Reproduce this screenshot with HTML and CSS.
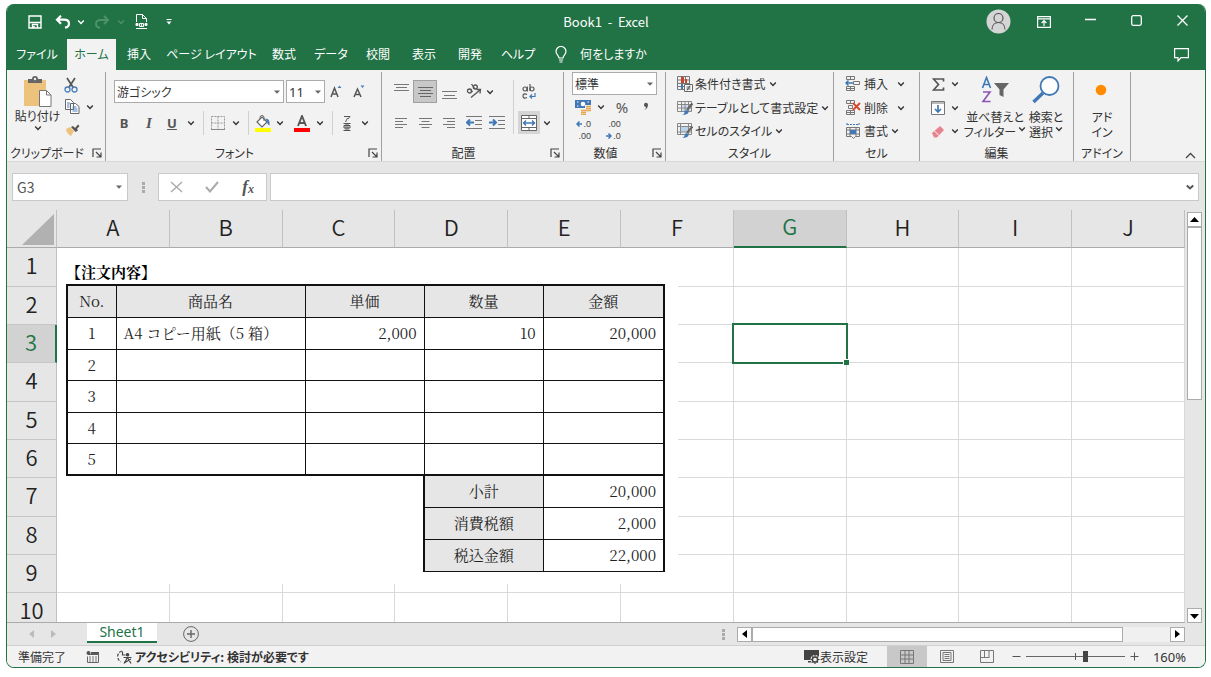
FILE: index.html
```html
<!DOCTYPE html>
<html lang="ja">
<head>
<meta charset="utf-8">
<title>Book1 - Excel</title>
<link rel="stylesheet" href="styles.css">
</head>
<body>
<svg class="sprite" aria-hidden="true">
  <symbol id="chev" viewBox="0 0 8 8"><path d="M1.2 2.6 4 5.4 6.8 2.6" fill="none" stroke="currentColor" stroke-width="1.4"/></symbol>
  <symbol id="tri" viewBox="0 0 8 8"><path d="M1 2.5h6L4 5.700z" fill="#666"/></symbol>
  <symbol id="launch" viewBox="0 0 10 10"><path d="M1 9V1h8M4 4l4.500 4.500M9 4.500V9H4.500" fill="none" stroke="#444" stroke-width="1.200"/></symbol>
</svg>
<div class="window">
  <header class="titlebar">
    <div class="quick">
      <button class="ib" aria-label="保存"><svg width="14" height="14" viewBox="0 0 14 14" fill="none" stroke="#fff" stroke-width="1.400"><path d="M1 1h12v12H1z"/><path d="M1 7.500h12"/><path d="M4.500 13v-3.500h5V13M6 13v-2"/></svg></button>
      <button class="ib" aria-label="元に戻す"><svg width="16" height="14" viewBox="0 0 16 14" fill="none" stroke="#fff" stroke-width="2.200"><path d="M6 .7 2 4.700l4 4M2 4.700h7c3 0 5 1.500 5 4 0 2-1.500 3.500-4 4"/></svg></button>
      <button class="ib" aria-label="元に戻す一覧"><svg class="chev"><use href="#chev"/></svg></button>
      <button class="ib dim" aria-label="やり直し"><svg width="16" height="14" viewBox="0 0 16 14" fill="none" stroke="currentColor" stroke-width="2"><path d="m10 1 4 4-4 4M14 5H7C4 5 2 6.500 2 9c0 2 1.500 3.500 4 4"/></svg></button>
      <button class="ib dim" aria-label="やり直し一覧"><svg class="chev"><use href="#chev"/></svg></button>
      <button class="ib" aria-label="印刷プレビュー"><svg width="13" height="15" viewBox="0 0 13 15" fill="none" stroke="#fff"><path d="M1.500 8V.5h6l4 4V8M7.500.5v4h4"/><path d="M1 9.500h2v2H1zM10 9.500h2v2h-2z" fill="#fff"/><path d="M4.500 9.500h4v3h-4zM1 14.500h11"/><circle cx="6.500" cy="11" r=".5" fill="#fff"/></svg></button>
      <button class="ib" aria-label="クイック アクセスのカスタマイズ"><svg width="8" height="8" viewBox="0 0 8 8"><path d="M1.500 1.500h5" stroke="#fff"/><path d="M1.500 3.500h5L4 6.500z" fill="#fff"/></svg></button>
    </div>
    <div class="title">Book1&nbsp; -&nbsp; Excel</div>
    <div class="winbtns">
      <button class="ib" aria-label="アカウント"><svg width="25" height="25" viewBox="0 0 25 25"><circle cx="12.500" cy="12.500" r="12" fill="#d5d5d5"/><g fill="none" stroke="#555" stroke-width="1.200"><circle cx="12.500" cy="9" r="4.500"/><path d="M6 20.500c0-4.500 3-7 6.500-7s6.500 2.500 6.500 7"/></g></svg></button>
      <button class="ib" aria-label="リボンの表示オプション"><svg width="14" height="12" viewBox="0 0 14 12" fill="none" stroke="#fff" stroke-width="1.200"><path d="M.6.6h12.800v10.800H.6zM.6 2.800h12.800M7 10V5M4.600 7 7 4.600 9.400 7"/></svg></button>
      <button class="ib" aria-label="最小化"><svg width="11" height="15" viewBox="0 0 11 15"><path d="M0 5.500h11" stroke="#fff" stroke-width="1.300"/></svg></button>
      <button class="ib" aria-label="最大化"><svg width="11" height="13" viewBox="0 0 11 13"><rect x=".7" y=".7" width="9.600" height="9.600" rx="1.500" fill="none" stroke="#fff" stroke-width="1.300"/></svg></button>
      <button class="ib" aria-label="閉じる"><svg width="11" height="13" viewBox="0 0 11 13"><path d="m.5.5 10 10m0-10-10 10" stroke="#fff" stroke-width="1.300"/></svg></button>
    </div>
  </header>

  <nav class="tabs">
    <button class="tab">ファイル</button>
    <button class="tab active">ホーム</button>
    <button class="tab">挿入</button>
    <button class="tab">ページ レイアウト</button>
    <button class="tab">数式</button>
    <button class="tab">データ</button>
    <button class="tab">校閲</button>
    <button class="tab">表示</button>
    <button class="tab">開発</button>
    <button class="tab">ヘルプ</button>
    <button class="tab tell"><svg width="12" height="17" viewBox="0 0 12 17" fill="none" stroke="#fff" stroke-width="1.200"><path d="M4 12c0-2.500-3-3.500-3-6.500a5 5 0 0 1 10 0C11 8.500 8 9.500 8 12zM4 14h4M4.500 16h3"/></svg>何をしますか</button>
    <button class="ib comment" aria-label="コメント"><svg width="15" height="14" viewBox="0 0 15 14" fill="none" stroke="#fff" stroke-width="1.200"><path d="M.6.6h13.800v9H7L4 13V9.600H.6z"/></svg></button>
  </nav>

  <section class="ribbon">
    <div class="group g-clip">
      <div class="body clip">
        <button class="big"><svg width="30" height="31" viewBox="0 0 30 31"><path d="M1 4h22v26H1z" fill="#edc27c"/><path d="M5 7V3h4a3 3 0 0 1 6 0h4v4z" fill="#666"/><circle cx="12" cy="3" r="1.200" fill="#f2f2f2"/><path d="M16.500 14.500h7l4.500 4.500v11.500H16.500z" fill="#fff" stroke="#777"/><path d="M23.500 14.500V19H28" fill="none" stroke="#777"/></svg><span>貼り付け</span><svg class="chev"><use href="#chev"/></svg></button>
        <div class="cliptools">
          <button class="ib" aria-label="切り取り"><svg width="14" height="16" viewBox="0 0 14 16" fill="none"><path d="m3 1 6.500 10M11 1 4.500 11" stroke="#555" stroke-width="1.700"/><circle cx="3.500" cy="12.500" r="2.500" stroke="#4a7ebb" stroke-width="1.300"/><circle cx="10.500" cy="12.500" r="2.500" stroke="#4a7ebb" stroke-width="1.300"/></svg></button>
          <button class="ib copy" aria-label="コピー"><svg width="15" height="15" viewBox="0 0 15 15" fill="#fff" stroke="#666"><path d="M.5.5h5l3 3v7h-8zM5.500 4.500h5l3.500 3v7H5.500z"/><path d="M2 4h3M2 6h2.500M2 8h2.500M7.500 8h4M7.500 10h5M7.500 12h5" stroke="#4a7ebb"/></svg></button>
          <button class="ib" aria-label="コピー一覧"><svg class="chev"><use href="#chev"/></svg></button>
          <button class="ib" aria-label="書式のコピー"><svg width="15" height="12" viewBox="0 0 15 12"><path d="m1 5 4-2 4 4-3 5C3 10.500 1.500 8 1 5z" fill="#edc27c"/><path d="m6 3 2-1 2 2L13 .5l1.500 1.500L12 5l1 1.500-2.500 1.500z" fill="#555"/></svg></button>
        </div>
      </div>
      <div class="foot"><span>クリップボード</span><button class="launch" aria-label="クリップボードの設定"><svg width="10" height="10"><use href="#launch"/></svg></button></div>
    </div>

    <div class="group g-font">
      <div class="body">
        <div class="fontrow1">
          <label class="combo"><select aria-label="フォント"><option>游ゴシック</option></select><svg class="chev"><use href="#tri"/></svg></label>
          <label class="combo size"><select aria-label="フォント サイズ"><option>11</option></select><svg class="chev"><use href="#tri"/></svg></label>
          <button class="ib" aria-label="フォント サイズの拡大"><svg width="14" height="14" viewBox="0 0 14 14" fill="none"><path d="m1 12 3.500-9L8 12M2.300 9h4.400" stroke="#555" stroke-width="1.500"/><path d="m7.500 3 2-2.500 2 2.500z" fill="#4a7ebb"/></svg></button>
          <button class="ib" aria-label="フォント サイズの縮小"><svg width="14" height="14" viewBox="0 0 14 14" fill="none"><path d="m2 12 3.500-8L9 12M3.300 9.500h4.400" stroke="#555" stroke-width="1.500"/><path d="m8.500.5 2 2.500 2-2.500z" fill="#4a7ebb"/></svg></button>
        </div>
        <div class="fontrow2">
          <button class="ib ch b" aria-label="太字">B</button>
          <button class="ib ch i" aria-label="斜体">I</button>
          <button class="ib ch u" aria-label="下線">U</button>
          <button class="ib" aria-label="下線一覧"><svg class="chev"><use href="#chev"/></svg></button>
          <i class="sep"></i>
          <button class="ib" aria-label="罫線"><svg width="14" height="14" viewBox="0 0 14 14"><path d="M.5.5h13v13H.5zM7 .5v13M.5 7h13" fill="none" stroke="#999" stroke-dasharray="2 1"/><path d="M0 13.500h14" stroke="#888"/></svg></button>
          <button class="ib" aria-label="罫線一覧"><svg class="chev"><use href="#chev"/></svg></button>
          <i class="sep"></i>
          <button class="ib" aria-label="塗りつぶしの色"><svg width="16" height="17" viewBox="0 0 16 17"><path d="m2 7 5-5 5 5-5 5z" fill="#fff" stroke="#666" stroke-width="1.200"/><path d="M5 4V2.500a2 2 0 0 1 4 0V6" fill="none" stroke="#666"/><path d="M10 3.500c4 .5 5 2 4.500 7-2-1-2.500-2.500-2.500-4z" fill="#4a7ebb"/><path d="M0 13h16v4H0z" fill="#ff0"/></svg></button>
          <button class="ib" aria-label="塗りつぶし一覧"><svg class="chev"><use href="#chev"/></svg></button>
          <button class="ib" aria-label="フォントの色"><svg width="16" height="17" viewBox="0 0 16 17"><path d="M4 11 8 1l4 10M5.200 8h5.600" fill="none" stroke="#555" stroke-width="1.900"/><path d="M0 13h16v4H0z" fill="#f00"/></svg></button>
          <button class="ib" aria-label="フォントの色一覧"><svg class="chev"><use href="#chev"/></svg></button>
          <i class="sep"></i>
          <button class="ib" aria-label="ふりがな"><svg width="8" height="16" viewBox="0 0 8 16" fill="none" stroke="#555"><path d="M1 1.500h6L5 4M4.500 3 2.500 7M.5 8.500h7M.5 15.500h7M3 8.500v7M5 8.500v7M1 10.500h6v2.500H1z"/></svg></button>
          <button class="ib" aria-label="ふりがな一覧"><svg class="chev"><use href="#chev"/></svg></button>
        </div>
      </div>
      <div class="foot"><span>フォント</span><button class="launch" aria-label="フォントの設定"><svg width="10" height="10"><use href="#launch"/></svg></button></div>
    </div>

    <div class="group g-align">
      <div class="body">
        <div class="aligngrid">
          <button class="ib" aria-label="上揃え"><svg width="15" height="16" viewBox="0 0 15 16" stroke="#777"><path d="M0 .5h15M2 3.500h11M0 6.500h15"/></svg></button>
          <button class="ib on" aria-label="上下中央揃え"><svg width="15" height="16" viewBox="0 0 15 16" stroke="#666"><path d="M0 3.500h15M2 6.500h11M0 9.500h15M2 12.500h11"/></svg></button>
          <button class="ib" aria-label="下揃え"><svg width="15" height="16" viewBox="0 0 15 16" stroke="#777"><path d="M0 7.500h15M2 11.500h11M0 14.500h15"/></svg></button>
          <button class="ib" aria-label="方向"><svg width="16" height="15" viewBox="0 0 16 15" fill="none" stroke="#555"><g stroke-width="1.300"><circle cx="3.500" cy="7" r="2"/><path d="m4.500 5 2 3"/><path d="m5.500 0 3.500 5"/><circle cx="9.300" cy="3" r="2"/></g><path d="m5 13.500 9-7.500M10.500 5.500h4l-.5 4" stroke-width="1.300"/></svg></button>
          <button class="ib start" aria-label="方向一覧"><svg class="chev"><use href="#chev"/></svg></button>
          <i class="sep tall"></i>
          <button class="ib" aria-label="折り返して全体を表示する"><svg width="14" height="16" viewBox="0 0 14 16" fill="none" stroke="#555" stroke-width="1.200"><circle cx="3" cy="5" r="2"/><path d="M5.300 2.500V7.500M8 0v7"/><circle cx="10" cy="5" r="2"/><path d="M5 10.500c-3-1.500-4 0-4 1.500s1 3 4 1.500"/><path d="M13 9v3.500H8M10 10.500l-2 2 2 2" stroke="#3f78b5"/></svg></button>
          <span></span>
          <button class="ib" aria-label="左揃え"><svg width="12" height="12" viewBox="0 0 12 12" stroke="#777"><path d="M0 1.500h12M0 4.500h8M0 7.500h12M0 10.500h8"/></svg></button>
          <button class="ib" aria-label="中央揃え"><svg width="13" height="12" viewBox="0 0 13 12" stroke="#777"><path d="M0 1.500h13M2.500 4.500h8M0 7.500h13M2.500 10.500h8"/></svg></button>
          <button class="ib" aria-label="右揃え"><svg width="12" height="12" viewBox="0 0 12 12" stroke="#777"><path d="M0 1.500h12M4 4.500h8M0 7.500h12M4 10.500h8"/></svg></button>
          <button class="ib" aria-label="インデントを減らす"><svg width="16" height="14" viewBox="0 0 16 14" fill="none" stroke="#777"><path d="M0 .5h16M9 4.500h7M9 8.500h7M0 12.500h16"/><path d="M8 6.500H1M4 3.500l-3 3 3 3" stroke="#3f78b5" stroke-width="2"/></svg></button>
          <button class="ib" aria-label="インデントを増やす"><svg width="16" height="14" viewBox="0 0 16 14" fill="none" stroke="#777"><path d="M0 .5h16M9 4.500h7M9 8.500h7M0 12.500h16"/><path d="M0 6.500h7M4 3.500l3 3-3 3" stroke="#3f78b5" stroke-width="2"/></svg></button>
          <button class="ib lit" aria-label="セルを結合して中央揃え"><svg width="16" height="16" viewBox="0 0 16 16" fill="none" stroke="#666"><path d="M.5.5h15v15H.5z" fill="#fff"/><path d="M.5 3.500h15M.5 12.500h15M8 .5v3M8 12.500v3"/><path d="M2.500 8h11M5 5.500 2.500 8 5 10.500M11 5.500 13.500 8 11 10.500" stroke="#3f78b5" stroke-width="1.400"/></svg></button>
          <button class="ib" aria-label="結合一覧"><svg class="chev"><use href="#chev"/></svg></button>
        </div>
      </div>
      <div class="foot"><span>配置</span><button class="launch" aria-label="配置の設定"><svg width="10" height="10"><use href="#launch"/></svg></button></div>
    </div>

    <div class="group g-num">
      <div class="body num">
        <label class="combo"><select aria-label="表示形式"><option>標準</option></select><svg class="chev"><use href="#tri"/></svg></label>
        <div class="numgrid">
          <button class="ib" aria-label="通貨表示形式"><svg width="16" height="16" viewBox="0 0 16 16"><path d="M0 1h16v8H0z" fill="#3f78b5"/><path d="M2 3h1.500M12.500 3H14M2 7h1.500" stroke="#fff"/><circle cx="8" cy="5" r="2.300" fill="#fff"/><path d="M5 10h6v5H5zM10 6h6v7h-6z" fill="#f2f2f2"/><path d="M6 11.500h5M6 13.500h5M6 15.500h5M11 7.500h5M11 9.500h5M11 11.500h5" stroke="#e6a852" stroke-width="1.300"/></svg></button>
          <button class="ib" aria-label="通貨一覧"><svg class="chev"><use href="#chev"/></svg></button>
          <button class="ib pct" aria-label="パーセント スタイル">%</button>
          <button class="ib comma" aria-label="桁区切りスタイル"><svg width="6" height="9" viewBox="0 0 6 9"><path d="M1 3a2 2 0 1 1 4-.5C5 5 4 7 1.500 8 2.500 7 3 6 3 5 1.800 5 1 4 1 3z" fill="#555"/></svg></button>
          <button class="ib dec" aria-label="小数点以下の表示桁数を増やす"><span><svg width="6" height="6" viewBox="0 0 6 6"><path d="M6 3H1M3.500.5 1 3l2.500 2.500" fill="none" stroke="#3f78b5" stroke-width="1.500"/></svg>.0</span><span>.00</span></button>
          <button class="ib dec d2" aria-label="小数点以下の表示桁数を減らす"><span>.00</span><span><svg width="6" height="6" viewBox="0 0 6 6"><path d="M0 3h5M2.500.5 5 3 2.500 5.500" fill="none" stroke="#3f78b5" stroke-width="1.500"/></svg>.0</span></button>
        </div>
      </div>
      <div class="foot"><span>数値</span><button class="launch" aria-label="表示形式の設定"><svg width="10" height="10"><use href="#launch"/></svg></button></div>
    </div>

    <div class="group g-style">
      <div class="body list">
        <button class="row"><svg width="16" height="16" viewBox="0 0 16 16" fill="none"><path d="M.5.5h12v13H.5zM.5 4h12M.5 7.500h12M.5 10.500h12M4.500.5v13M8.500.5v13" stroke="#777"/><path d="M4 1h3v6H4z" fill="#c8442c"/><path d="M4 8h2v5H4z" fill="#3f78b5"/><path d="M8 3h2v4H8z" fill="#c8442c"/><path d="M7.500 8.500h8v7h-8z" fill="#fff" stroke="#666"/><path d="M9.500 11h4M9.500 13h4M13 9.500l-3 5" stroke="#555"/></svg><span>条件付き書式</span><svg class="chev"><use href="#chev"/></svg></button>
        <button class="row"><svg width="16" height="16" viewBox="0 0 16 16" fill="none"><path d="M5 5h9v7H5z" fill="#cfe0f1"/><path d="M.5 1.500h14v10H.5zM.5 4.500h14M.5 8h14M4.500 1.500v10M8 1.500v10M11.500 1.500v10" stroke="#888"/><path d="M15.500 3.500 10 10" stroke="#666" stroke-width="2.200"/><path d="M5 15c3 0 2-5 5-5l1.500 2c0 2-3 3-6.500 3z" fill="#3f78b5"/></svg><span>テーブルとして書式設定</span><svg class="chev"><use href="#chev"/></svg></button>
        <button class="row"><svg width="16" height="16" viewBox="0 0 16 16" fill="none"><path d="M3.500 4h8v5h-8z" fill="#b9d3ec"/><path d="M.5.5h14v11H.5zM.5 3.500h14M.5 9h14M3.500.5v11M11.500.5v11" stroke="#888"/><path d="M15.500 3.500 10 10" stroke="#666" stroke-width="2.200"/><path d="M5 15c3 0 2-5 5-5l1.500 2c0 2-3 3-6.500 3z" fill="#3f78b5"/></svg><span>セルのスタイル</span><svg class="chev"><use href="#chev"/></svg></button>
      </div>
      <div class="foot"><span>スタイル</span></div>
    </div>

    <div class="group g-cell">
      <div class="body list">
        <button class="row"><svg width="16" height="16" viewBox="0 0 16 16" fill="none"><path d="M1.500.5h8v3h-8zM5.500.5v3M1.500 10.500h8v4h-8zM5.500 10.500v4M1.500 12.500h8M8.500 5.500h6v3h-6z" stroke="#777"/><path d="M8 7H1M3.500 4.500 1 7l2.500 2.500" stroke="#3f78b5" stroke-width="1.500"/></svg><span>挿入</span><svg class="chev far"><use href="#chev"/></svg></button>
        <button class="row"><svg width="16" height="16" viewBox="0 0 16 16" fill="none"><path d="M1.500.5h8v3h-8zM5.500.5v3M1.500 10.500h8v4h-8zM5.500 10.500v4M1.500 12.500h8M3.500 5.500h4v3h-4z" stroke="#777"/><path d="m8 3 7 7m0-7-7 7" stroke="#d8492c" stroke-width="1.900"/></svg><span>削除</span><svg class="chev far"><use href="#chev"/></svg></button>
        <button class="row"><svg width="16" height="16" viewBox="0 0 16 16" fill="none"><path d="M2 1.500h12M2 0v3M14 0v3" stroke="#3f78b5" stroke-dasharray="2 1"/><path d="M1.500 4.500h13v9h-4l-2 2-2-2h-5zM1.500 7h13M1.500 11h13M5 4.500v9M11 4.500v9" stroke="#777"/><path d="M5 7h6v4H5z" fill="#3f78b5"/></svg><span>書式</span><svg class="chev"><use href="#chev"/></svg></button>
      </div>
      <div class="foot"><span>セル</span></div>
    </div>

    <div class="group g-edit">
      <div class="body edit">
        <div class="edittools">
          <button class="ib" aria-label="合計"><svg width="13" height="13" viewBox="0 0 13 13"><path d="M11.500 3.500V1H1.500l5 5.500-5 5.500h10V9.500" fill="none" stroke="#555" stroke-width="1.700"/></svg></button>
          <button class="ib" aria-label="合計一覧"><svg class="chev"><use href="#chev"/></svg></button>
          <button class="ib" aria-label="フィル"><svg width="14" height="14" viewBox="0 0 14 14" fill="none"><path d="M.5.5h13v13H.5z" fill="#fff" stroke="#777"/><path d="M.5 2h13" stroke="#777"/><path d="M7 4v7M4 8l3 3 3-3" stroke="#3f78b5" stroke-width="1.700"/></svg></button>
          <button class="ib" aria-label="フィル一覧"><svg class="chev"><use href="#chev"/></svg></button>
          <button class="ib" aria-label="クリア"><svg width="14" height="13" viewBox="0 0 14 13"><path d="m1 8 8-7 4 4-7 7.500H3z" fill="#e9828f"/><path d="m3.500 6 4.500 4.500" stroke="#fff"/></svg></button>
          <button class="ib" aria-label="クリア一覧"><svg class="chev"><use href="#chev"/></svg></button>
        </div>
        <button class="big two"><svg width="28" height="28" viewBox="0 0 28 28" fill="none"><path d="m1.500 12 4-10.500L9.500 12M3 8.500h5" stroke="#3f78b5" stroke-width="1.600"/><path d="M2 16h7l-7 9.500h7.500" stroke="#8c55b5" stroke-width="1.600"/><path d="M13 7h15l-5.500 6.500V21l-4-2v-5.500z" fill="#666"/></svg><span>並べ替えと</span><span>フィルター <svg class="chev"><use href="#chev"/></svg></span></button>
        <button class="big two"><svg width="28" height="28" viewBox="0 0 28 28" fill="none"><circle cx="17.500" cy="10" r="9" fill="#fff" stroke="#3f78b5" stroke-width="1.800"/><path d="m11 17-9.500 9" stroke="#3f78b5" stroke-width="3.400"/></svg><span>検索と</span><span>選択 <svg class="chev"><use href="#chev"/></svg></span></button>
      </div>
      <div class="foot"><span>編集</span></div>
    </div>

    <div class="group g-addin">
      <div class="body">
        <button class="big two"><svg width="28" height="28" viewBox="0 0 28 28"><circle cx="13" cy="14" r="5.300" fill="#ff8c00"/></svg><span>アド</span><span>イン</span></button>
      </div>
      <div class="foot"><span>アドイン</span></div>
    </div>
    <button class="ib collapse" aria-label="リボンを折りたたむ"><svg width="11" height="7" viewBox="0 0 11 7"><path d="m1 6 4.500-4.500L10 6" fill="none" stroke="#444" stroke-width="1.300"/></svg></button>
  </section>

  <section class="formula">
    <label class="field name"><input type="text" value="G3" aria-label="名前ボックス"><svg class="chev"><use href="#tri"/></svg></label>
    <i class="dots"></i>
    <div class="field fx">
      <button class="ib" aria-label="キャンセル"><svg width="13" height="12" viewBox="0 0 13 12"><path d="m1 1 11 10M12 1 1 11" stroke="#aaa" stroke-width="1.400"/></svg></button>
      <button class="ib" aria-label="入力"><svg width="14" height="12" viewBox="0 0 14 12"><path d="m1 6 4 4.500L13 1" fill="none" stroke="#aaa" stroke-width="2"/></svg></button>
      <button class="ib fn" aria-label="関数の挿入">f<small>x</small></button>
    </div>
    <label class="field bar"><input type="text" aria-label="数式バー"><svg class="chev" viewBox="0 0 8 8"><path d="M.8 2.500 4 5.500l3.200-3" fill="none" stroke="#555" stroke-width="2"/></svg></label>
  </section>

  <main class="sheet">
    <div class="cells">
      <table class="grid">
        <colgroup><col class="rowhead"><col><col><col><col><col><col><col><col><col><col></colgroup>
        <thead><tr><th class="corner"><svg width="32" height="31" viewBox="0 0 32 31"><path d="M32 0v31H0z" fill="#b1b1b1"/></svg></th><th>A</th><th>B</th><th>C</th><th>D</th><th>E</th><th>F</th><th class="sel">G</th><th>H</th><th>I</th><th>J</th></tr></thead>
        <tbody>
          <tr><th>1</th><td></td><td></td><td></td><td></td><td></td><td></td><td></td><td></td><td></td><td></td></tr>
          <tr><th>2</th><td></td><td></td><td></td><td></td><td></td><td></td><td></td><td></td><td></td><td></td></tr>
          <tr><th class="sel">3</th><td></td><td></td><td></td><td></td><td></td><td></td><td class="cursor"></td><td></td><td></td><td></td></tr>
          <tr><th>4</th><td></td><td></td><td></td><td></td><td></td><td></td><td></td><td></td><td></td><td></td></tr>
          <tr><th>5</th><td></td><td></td><td></td><td></td><td></td><td></td><td></td><td></td><td></td><td></td></tr>
          <tr><th>6</th><td></td><td></td><td></td><td></td><td></td><td></td><td></td><td></td><td></td><td></td></tr>
          <tr><th>7</th><td></td><td></td><td></td><td></td><td></td><td></td><td></td><td></td><td></td><td></td></tr>
          <tr><th>8</th><td></td><td></td><td></td><td></td><td></td><td></td><td></td><td></td><td></td><td></td></tr>
          <tr><th>9</th><td></td><td></td><td></td><td></td><td></td><td></td><td></td><td></td><td></td><td></td></tr>
          <tr><th>10</th><td></td><td></td><td></td><td></td><td></td><td></td><td></td><td></td><td></td><td></td></tr>
        </tbody>
      </table>
      <div class="pasted">
        <table class="order">
          <caption>【注文内容】</caption>
          <colgroup><col class="c-no"><col class="c-item"><col class="c-num"><col class="c-num"><col class="c-sum"></colgroup>
          <thead><tr><th>No.</th><th>商品名</th><th>単価</th><th>数量</th><th>金額</th></tr></thead>
          <tbody>
            <tr><td class="no">1</td><td class="item">A4 コピー用紙（5 箱）</td><td>2,000</td><td>10</td><td>20,000</td></tr>
            <tr><td class="no">2</td><td></td><td></td><td></td><td></td></tr>
            <tr><td class="no">3</td><td></td><td></td><td></td><td></td></tr>
            <tr><td class="no">4</td><td></td><td></td><td></td><td></td></tr>
            <tr><td class="no">5</td><td></td><td></td><td></td><td></td></tr>
          </tbody>
          <tfoot>
            <tr><td class="blank" colspan="3"></td><th>小計</th><td>20,000</td></tr>
            <tr><td class="blank" colspan="3"></td><th>消費税額</th><td>2,000</td></tr>
            <tr><td class="blank" colspan="3"></td><th>税込金額</th><td>22,000</td></tr>
          </tfoot>
        </table>
      </div>
    </div>
    <div class="vscroll">
      <button class="sb" aria-label="上へ"><svg width="9" height="6" viewBox="0 0 9 6"><path d="M0 5h9L4.500 0z"/></svg></button>
      <div class="thumb"></div>
      <button class="sb" aria-label="下へ"><svg width="9" height="6" viewBox="0 0 9 6"><path d="M0 1h9L4.500 6z"/></svg></button>
    </div>
  </main>

  <div class="sheettabs">
    <div class="nav">
      <button class="ib" aria-label="前のシート"><svg width="5" height="8" viewBox="0 0 5 8"><path d="M5 0v8L0 4z" fill="#bbb"/></svg></button>
      <button class="ib" aria-label="次のシート"><svg width="5" height="8" viewBox="0 0 5 8"><path d="M0 0v8l5-4z" fill="#bbb"/></svg></button>
    </div>
    <button class="sheettab">Sheet1</button>
    <button class="ib add" aria-label="新しいシート"><svg width="16" height="16" viewBox="0 0 16 16" fill="none" stroke="#666"><circle cx="8" cy="8" r="7.400"/><path d="M8 4v8M4 8h8" stroke-width="1.400"/></svg></button>
    <i class="dots"></i>
    <div class="hscroll">
      <button class="sb" aria-label="左へ"><svg width="5" height="8" viewBox="0 0 5 8"><path d="M5 0v8L0 4z"/></svg></button>
      <div class="thumb"></div>
      <button class="sb" aria-label="右へ"><svg width="5" height="8" viewBox="0 0 5 8"><path d="M0 0v8l5-4z"/></svg></button>
    </div>
  </div>

  <footer class="status">
    <span class="ready">準備完了</span>
    <button class="ib macro" aria-label="マクロの記録"><svg width="13" height="12" viewBox="0 0 13 12"><path d="M2 3.500h10.500v8H1.500v-6" fill="none" stroke="#666"/><path d="M5 1h8v2.500H5z" fill="#555"/><circle cx="2.500" cy="2" r="2" fill="#555"/><path d="M3 6h8M3 8h8M3 10h8" stroke="#777" stroke-dasharray="2 1"/></svg></button>
    <button class="a11y"><svg width="16" height="14" viewBox="0 0 16 14" fill="none" stroke="#444" stroke-width="1.200"><path d="M5 1C2 2 .5 4 .7 7c.2 2 1.300 4 3.300 4.800" stroke-dasharray="3 1.500"/><path d="M5.500 1.500V5h3"/><circle cx="10.500" cy="4.800" r="1.200" fill="#444"/><path d="M6.500 7.500h8M10.500 7.500l-3.500 6M10.500 7.500l3.500 6M7 13l7-4"/></svg>アクセシビリティ: 検討が必要です</button>
    <button class="disp"><svg width="16" height="15" viewBox="0 0 16 15"><path d="M0 1h15v10H0zM4 12h4v1.500H4z" fill="#444"/><circle cx="11" cy="10.500" r="4.500" fill="#f2f2f2"/><circle cx="11" cy="10.500" r="2.600" fill="none" stroke="#444" stroke-width="1.500"/><path d="M11 6v1.500M11 13.500V15M6.500 10.500H8M14 10.500h1.500M8 7.500l1 1M13 12.500l1 1M14 7.500l-1 1M9 12.500l-1 1" stroke="#444" stroke-width="1.200"/></svg>表示設定</button>
    <button class="view on" aria-label="標準"><svg width="14" height="14" viewBox="0 0 14 14" fill="none" stroke="#777"><path d="M.5.5h13v13H.5zM.5 5h13M.5 9h13M5 .5v13M9 .5v13"/></svg></button>
    <button class="view" aria-label="ページ レイアウト"><svg width="14" height="13" viewBox="0 0 14 13" fill="none" stroke="#777"><path d="M.5.5h13v12H.5zM3 2.500h8v8H3zM4.500 4.500h5M4.500 6.500h5M4.500 8.500h5"/></svg></button>
    <button class="view" aria-label="改ページ プレビュー"><svg width="14" height="13" viewBox="0 0 14 13" fill="none" stroke="#777"><path d="M.5.5h13v12H.5zM4.500.5V7M9 .5V7M0 7.500h9.500"/></svg></button>
    <button class="ib zb" aria-label="縮小"><svg width="9" height="9" viewBox="0 0 9 9"><path d="M.5 4.500h8" stroke="#555"/></svg></button>
    <input class="zoom" type="range" min="0" max="100" value="61" aria-label="ズーム">
    <button class="ib zb" aria-label="拡大"><svg width="9" height="9" viewBox="0 0 9 9"><path d="M.5 4.500h8M4.500.5v8" stroke="#555"/></svg></button>
    <span class="pctv">160%</span>
  </footer>
</div>
</body>
</html>
```
FILE: styles.css
```css
* { box-sizing: border-box; }
body {
  margin: 0;
  height: 100vh;
  display: flex;
  padding: 4px 5px 9px 6px;
  background: #fff;
  color: #333;
  font: 12px/16px "Noto Sans CJK JP", sans-serif;
  font-feature-settings: "palt" 1;
}
button, input, select { font: inherit; font-feature-settings: inherit; color: inherit; border: 0; background: none; padding: 0; margin: 0; outline: 0; white-space: nowrap; }
svg { display: block; flex: none; }
.sprite { position: absolute; width: 0; height: 0; }
.chev { width: 8px; height: 8px; }
.ib { display: flex; align-items: center; justify-content: center; }

.window {
  flex: 1;
  min-width: 0;
  display: flex;
  flex-direction: column;
  border: 1px solid #217346;
  border-top: 0;
  border-radius: 8px;
  overflow: hidden;
  background: #e6e6e6;
}

/* Title bar */
.titlebar { flex: none; height: 35px; background: #217346; color: #fff; display: grid; grid-template-columns: 1fr auto 1fr; align-items: center; }
.quick { display: grid; grid-template-columns: 28px 28px 8px 34px 4px 36px 20px; padding-left: 14px; }
.dim { color: #4f916c; }
.title { font-size: 13px; }
.winbtns { justify-self: end; display: grid; grid-template-columns: 46px 46px 46px 46px 46px; }

/* Ribbon tabs */
.tabs { flex: none; height: 31px; background: #217346; color: #fff; display: grid; grid-template-columns: 60px 49px 46px 99px 46px 48px 46px 46px 46px 50px 116px 1fr; }
.tab { display: flex; align-items: center; justify-content: center; gap: 13px; padding-bottom: 1px; }
.tab.active { background: #f2f2f2; color: #217346; }
.comment { justify-self: end; padding-right: 16px; }

/* Ribbon */
.ribbon { flex: none; min-height: 92px; background: #f2f2f2; border-bottom: 1px solid #d8d8d8; display: flex; padding: 2px 0 0; }
.group { display: flex; flex-direction: column; border-right: 1px solid #a0a0a0; flex: none; }
.group .body { flex: 1; }
.foot { display: grid; grid-template-columns: 1fr; align-items: center; height: 16px; text-align: center; }
.foot > * { grid-area: 1 / 1; }
.launch { justify-self: end; padding-right: 3px; }
.g-clip { width: 99px; }
.g-clip .foot span, .g-font .foot span, .g-align .foot span, .g-num .foot span { padding-right: 18px; }
.g-font { width: 276px; }
.g-align { width: 182px; }
.g-num { width: 102px; }
.g-style { width: 168px; }
.g-cell { width: 86px; }
.g-edit { width: 154px; }
.g-addin { width: 57px; }
.big { display: flex; flex-direction: column; align-items: center; line-height: 15px; }
.big span { display: flex; align-items: center; gap: 2px; }

.clip { display: flex; padding: 4px 0 0 9px; gap: 4px; }
.clip .big { width: 43px; align-items: center; align-self: start; gap: 1px; }
.cliptools { display: grid; grid-template-columns: 18px 18px; grid-template-rows: 17px 27px 19px; align-self: start; }
.cliptools > :first-child { grid-column: 1 / 3; justify-content: start; padding-left: 1px; }

.fontrow1 { display: grid; grid-template-columns: 170px 39px 20px 20px; column-gap: 2px; padding: 8px 0 0 8px; height: 31px; }
.combo { display: grid; grid-template-columns: 1fr; align-items: center; height: 23px; border: 1px solid #ababab; background: #fff; }
.combo > * { grid-area: 1 / 1; }
.combo select { appearance: none; width: 100%; padding-left: 2px; }
.combo .chev { justify-self: end; margin-right: 2px; pointer-events: none; }
.size select { font: 13px/18px "Noto Sans", sans-serif; }
.fontrow2 { display: grid; grid-template-columns: 24px 26px 20px 18px 6px 24px 12px 12px 18px 16px 28px 8px 16px 14px 22px; padding: 8px 0 0 6px; height: 32px; }
.ch { font: bold 13px "Noto Sans", sans-serif; color: #555; }
.i { font-family: "Liberation Serif", serif; font-style: italic; font-size: 15px; }
.u { text-decoration: underline; }
.sep { width: 1px; background: #d0d0d0; justify-self: center; }

.aligngrid { display: grid; grid-template-columns: 24px 24px 24px 25px 22px 10px 22px 14px; grid-template-rows: 23px 23px; row-gap: 8px; padding: 8px 0 0 7px; }
.sep.tall { grid-row: 1 / 3; grid-column: 6; }
.on { background: #c8c8c8; }
.aligngrid .on { border: 1px solid #a0a0a0; }
.lit { background: #d5d5d5; }
.start { justify-content: start; }

.num .combo { margin: 0 8px; }
.numgrid { display: grid; grid-template-columns: 22px 14px 28px 20px; grid-template-rows: 23px 24px; padding: 0 0 0 8px; }
.pct { font: 15px/18px "Noto Sans", sans-serif; color: #555; }
.dec { flex-direction: column; font: 9px/12px "Liberation Sans", sans-serif; color: #444; align-items: end; padding-right: 3px; }
.dec span { display: flex; align-items: center; gap: 1px; }
.d2 { grid-column: 2 / 4; justify-self: center; }

.list { display: grid; grid-template-rows: 24px 23px 24px; align-content: start; }
.row { display: flex; align-items: center; gap: 2px; }
.row .chev { margin-left: 1px; }
.g-style .row, .g-cell .row { padding-left: 11px; }
.g-cell .row svg:first-child { margin-right: 1px; }
.row .far { margin-left: 7px; }

.edit { display: flex; }
.edittools { display: grid; grid-template-columns: 18px 16px; grid-template-rows: 24px 23px 24px; padding-left: 9px; align-content: start; }
.two { padding-top: 4px; }
.edit .two { width: 64px; }
.edit .two + .two { width: 38px; }
.two svg:first-child { margin-bottom: 5px; }
.g-addin .two { width: 100%; }
.collapse { margin-left: auto; align-self: end; padding: 0 9px 2px 0; }

/* Formula bar */
.formula { flex: none; display: grid; grid-template-columns: 116px 30px 109px 1fr; padding: 11px 6px 9px 5px; }
.field { height: 28px; display: flex; align-items: center; background: #fff; border: 1px solid #c9c9c9; }
.field input { flex: 1; min-width: 0; padding-left: 4px; font-size: 14px; color: #555; }
.name .chev { margin-right: 4px; }
.bar { margin-left: 3px; }
.bar .chev { margin-right: 4px; }
.dots { width: 3px; height: 11px; place-self: center; background: repeating-linear-gradient(#aaa 0 3px, transparent 3px 4px); }
.fx { display: grid; grid-template-columns: 1fr 1fr 1fr; }
.fn { font: italic bold 17px "Liberation Serif", serif; color: #555; }
.fn small { font-size: 12px; padding-top: 4px; }

/* Worksheet */
.sheet { flex: 1; min-height: 0; display: flex; gap: 2px; }
.cells { position: relative; flex: 1; min-width: 0; overflow: hidden; background: #fff; border-bottom: 1px solid #ababab; }
.grid { width: 100%; table-layout: fixed; border-collapse: separate; border-spacing: 0; }
.rowhead { width: 50px; }
.grid th { background: #e6e6e6; font-weight: 350; font-size: 22px; line-height: 24px; color: #222; padding: 0 0 6px; border-right: 1px solid #c0c0c0; border-bottom: 1px solid #ababab; }
.grid thead th { height: 38px; }
.grid tbody th { border-bottom-color: #c6c6c6; }
.grid td { padding: 0; border-right: 1px solid #d9d9d9; border-bottom: 1px solid #d9d9d9; }
.grid tbody tr { height: 38px; }
.grid tbody tr:nth-child(3n + 1) { height: 39px; }
.grid .corner { padding: 0; }
.corner svg { margin: 2px 2px 0 auto; }
.grid thead .sel { background: #d2d2d2; color: #217346; border-bottom: 2px solid #217346; }
.grid tbody .sel { background: #d2d2d2; color: #217346; border-right: 2px solid #217346; }
.cursor { position: relative; }
.cursor::before { content: ""; position: absolute; inset: -2px; border: 2px solid #217346; }
.cursor::after { content: ""; position: absolute; right: -3px; bottom: -3px; width: 5px; height: 5px; background: #217346; border: solid #fff; border-width: 1px 0 0 1px; }

.pasted { position: absolute; left: 50px; top: 38px; padding: 12px 13px 12px 9px; background: #fff; }
.order { border-collapse: collapse; table-layout: fixed; width: 599px; font: 15px/24px "Noto Serif CJK JP", "Noto Serif JP", "Liberation Serif", serif; font-feature-settings: normal; color: #222; }
.order caption { text-align: left; font-weight: bold; color: #000; }
.c-no { width: 49px; }
.c-item { width: 189px; }
.c-num { width: 119px; }
.order tr { height: 32px; }
.order tbody tr:nth-child(even) { height: 31px; }
.order th { background: #e6e6e6; font-weight: 400; }
.order th, .order td { padding: 0 7px; border: 1px solid #111; }
.order td { text-align: right; }
.order thead th { border-top: 2px solid #111; }
.order thead th:first-child, .order tbody td:first-child { border-left: 2px solid #111; }
.order tr > :last-child { border-right: 2px solid #111; }
.order tbody tr:last-child td { border-bottom: 2px solid #111; }
.order tfoot th { border-left: 2px solid #111; }
.order td.no { text-align: center; }
.order td.item { text-align: left; }
.order tfoot .blank { border-left: 0; border-bottom: 0; border-top: 0; }
.order tfoot tr:first-child .blank { border-top: 2px solid #111; }

/* Scroll bars */
.vscroll { width: 18px; padding: 2px 3px 0 0; display: flex; flex-direction: column; background: #e6e6e6; }
.sb { display: flex; align-items: center; justify-content: center; width: 15px; height: 15px; flex: none; background: #fff; border: 1px solid #ababab; }
.thumb { background: #fff; border: 1px solid #ababab; }
.vscroll .thumb { height: 42%; margin-bottom: auto; }

/* Sheet tabs */
.sheettabs { flex: none; height: 23px; display: flex; align-items: center; padding-right: 20px; border-bottom: 1px solid #d0d0d0; }
.nav { width: 80px; display: flex; gap: 17px; padding-left: 22px; }
.sheettab { align-self: start; height: 20px; width: 70px; background: #fff; border-bottom: 2px solid #217346; color: #217346; font: 14px/18px "Noto Sans", sans-serif; }
.add { margin-left: 26px; }
.sheettabs .dots { margin: 0 12px 0 auto; align-self: center; }
.hscroll { width: 38%; display: flex; background: #f0f0f0; height: 15px; }
.hscroll .thumb { width: 371px; flex: 0 1 371px; margin-right: auto; }

/* Status bar */
.status { flex: none; height: 21px; background: #f2f2f2; display: flex; align-items: center; padding: 0 19px 0 11px; }
.macro { margin-left: 20px; }
.a11y { display: flex; align-items: center; gap: 2px; margin-left: 18px; font-weight: 700; }
.disp { display: flex; align-items: center; margin: 0 19px 0 auto; }
.view { width: 40px; height: 21px; display: flex; align-items: center; justify-content: center; }
.zb { width: 19px; height: 19px; }
.zoom { appearance: none; width: 99px; height: 11px; background: linear-gradient(#555, #555) 50% 50% / 1px 7px no-repeat, linear-gradient(#666, #666) 50% 50% / 100% 1px no-repeat; }
.zoom::-webkit-slider-thumb { appearance: none; width: 5px; height: 11px; background: #444; }
.pctv { font: 13px/16px "Noto Sans", sans-serif; width: 42px; text-align: right; }
```
